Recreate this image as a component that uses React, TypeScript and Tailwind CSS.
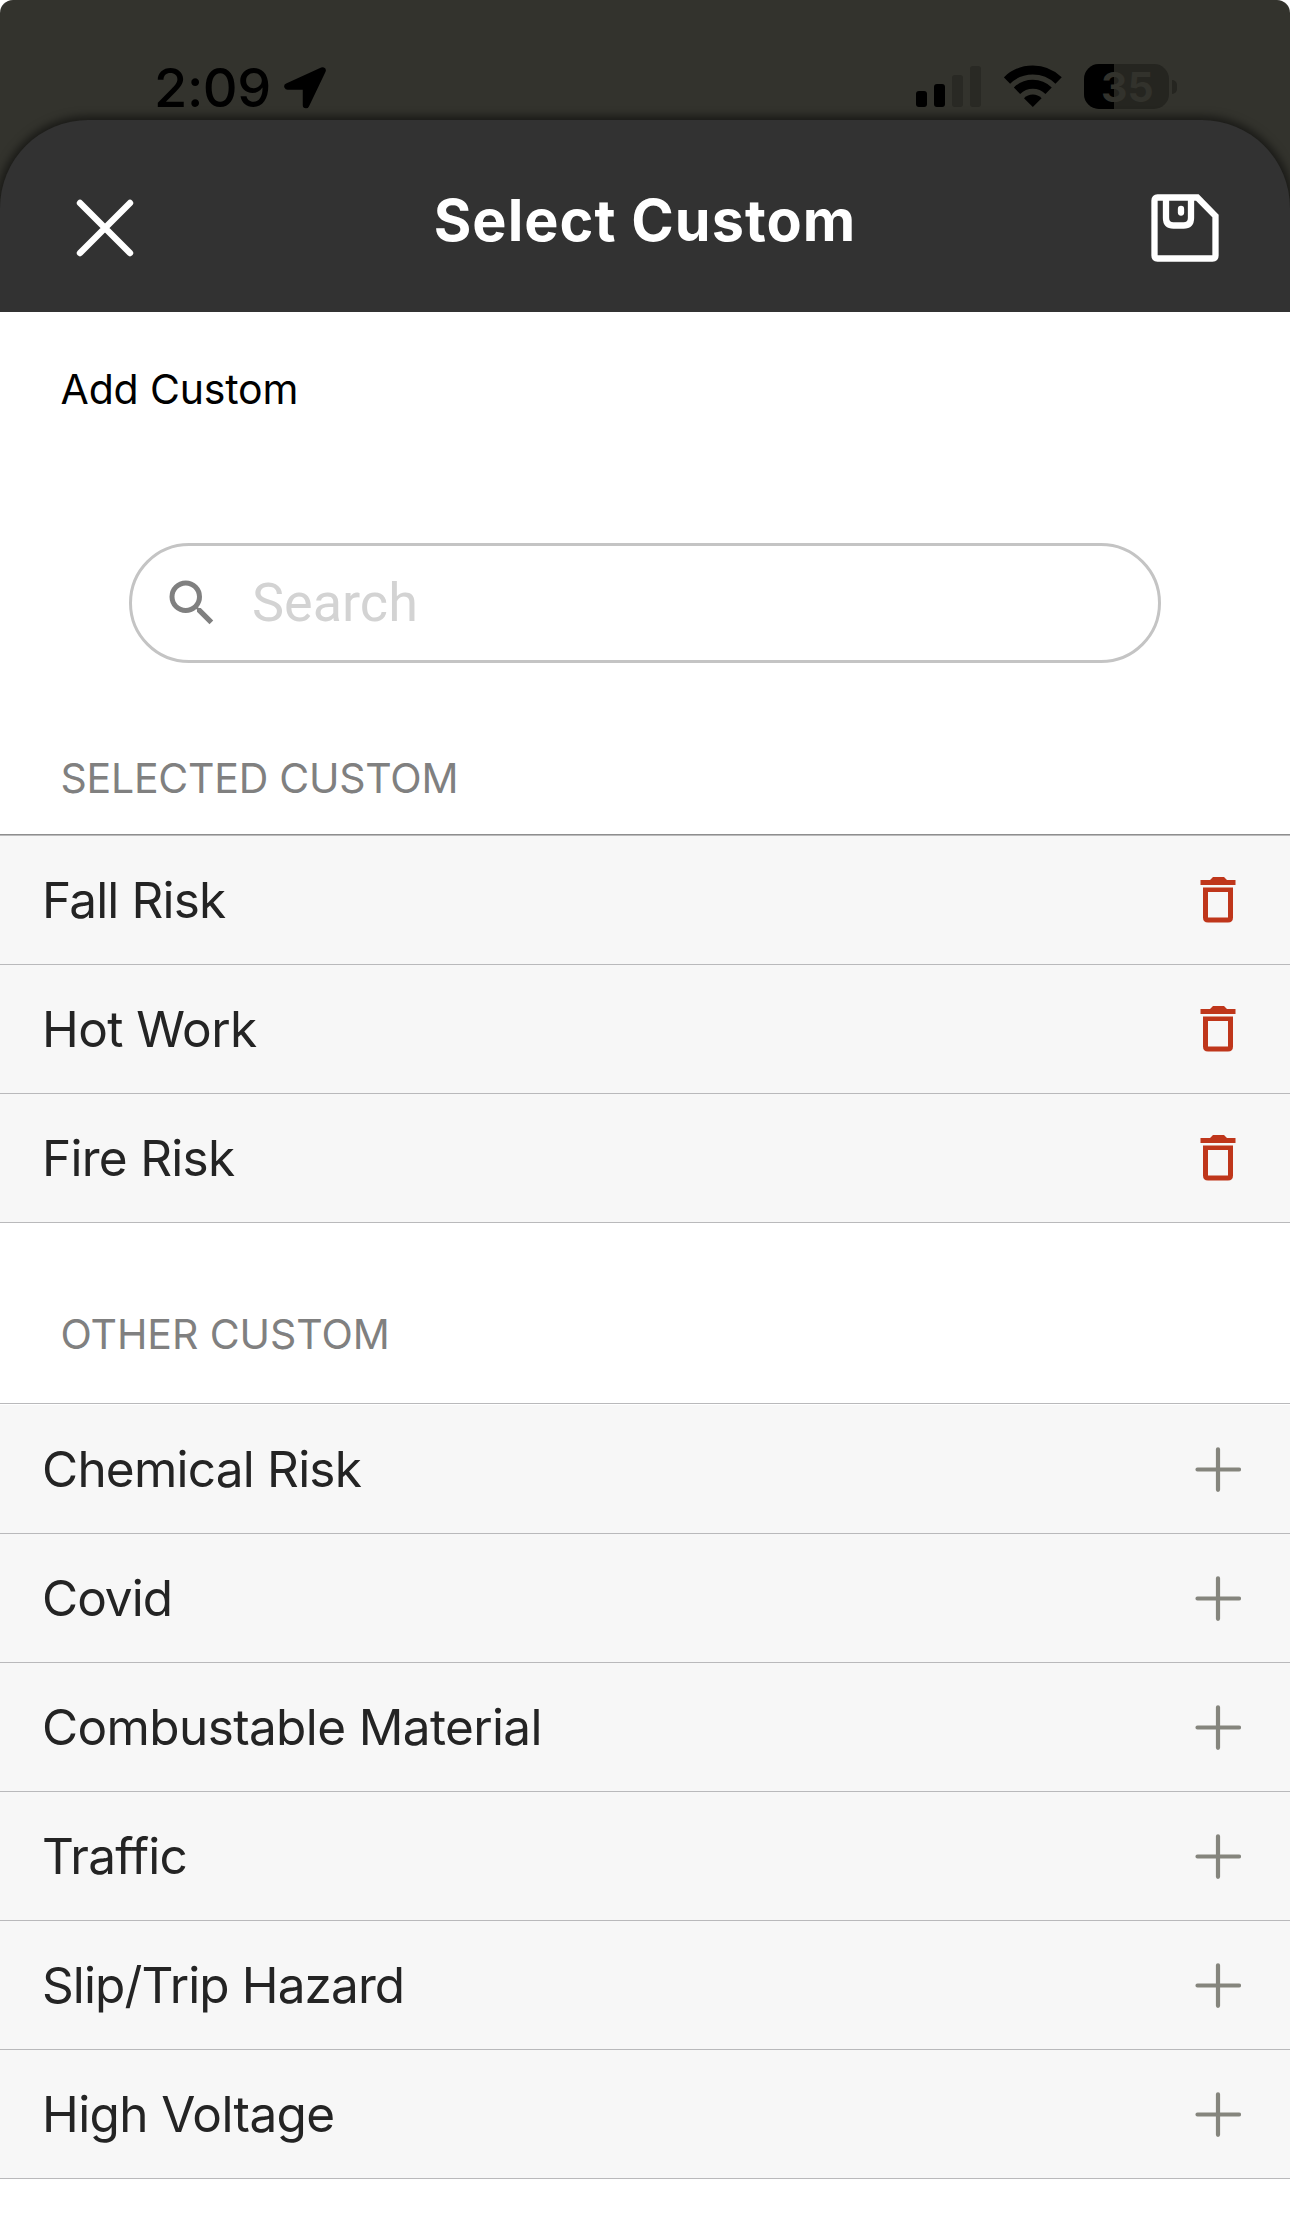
import React from 'react';
import { MdSearch } from 'react-icons/md';

type Item = { label: string; tracking: string };

const selected: Item[] = [
  { label: 'Fall Risk', tracking: 'tracking-[-0.83px]' },
  { label: 'Hot Work', tracking: 'tracking-[-0.56px]' },
  { label: 'Fire Risk', tracking: 'tracking-[-0.72px]' },
];

const others: Item[] = [
  { label: 'Chemical Risk', tracking: 'tracking-[-0.78px]' },
  { label: 'Covid', tracking: 'tracking-[-1px]' },
  { label: 'Combustable Material', tracking: 'tracking-[-0.63px]' },
  { label: 'Traffic', tracking: 'tracking-[-0.8px]' },
  { label: 'Slip/Trip Hazard', tracking: 'tracking-[-0.89px]' },
  { label: 'High Voltage', tracking: 'tracking-[-0.6px]' },
];

function LocationArrow() {
  return (
    <svg width="42" height="42" viewBox="0 0 42 42" className="ml-[13px] mt-[3px]">
      <path
        d="M38.5 3.5 3.5 19.5H22V38Z"
        fill="#000"
        stroke="#000"
        strokeWidth="6.5"
        strokeLinejoin="round"
      />
    </svg>
  );
}

function Signal() {
  return (
    <div className="flex h-[42px] items-end gap-[7px]">
      <div className="h-4 w-[11px] rounded-[3px] bg-black" />
      <div className="h-[23px] w-[11px] rounded-[3px] bg-black" />
      <div className="h-8 w-[11px] rounded-[3px] bg-[#292924]" />
      <div className="h-[41px] w-[11px] rounded-[3px] bg-[#292924]" />
    </div>
  );
}

function Wifi() {
  return (
    <svg width="58" height="42" viewBox="0 0 58 42" className="ml-[23px]">
      <g fill="none" stroke="#000" strokeWidth="9">
        <path d="M3 15.5A37 37 0 0 1 54.6 15.5" />
        <path d="M13 25.7A22.6 22.6 0 0 1 44.6 25.7" />
      </g>
      <path d="M20 33.2A12.5 12.5 0 0 1 37.6 33.2L28.8 42Z" fill="#000" />
    </svg>
  );
}

function Battery() {
  return (
    <div className="ml-[22px] flex items-center">
      <div className="relative flex h-[45px] w-[85px] rounded-[15px] bg-[#252520]">
        <div className="h-full w-[30px] rounded-l-[15px] bg-black" />
        <span className="absolute left-[17px] top-px text-[41px] font-bold leading-[45px] text-[#32322c]">
          35
        </span>
      </div>
      <div className="ml-[3px] h-[14px] w-[5px] rounded-r-full bg-[#252520]" />
    </div>
  );
}

function CloseIcon() {
  return (
    <svg width="60" height="60" viewBox="0 0 60 60">
      <path d="M5 5 55 55M55 5 5 55" stroke="#fff" strokeWidth="6.4" strokeLinecap="round" />
    </svg>
  );
}

function SaveIcon() {
  return (
    <svg width="68" height="68" viewBox="0 0 68 68" fill="none" stroke="#fff" strokeWidth="6.3">
      <path d="M46.3 3.5H6.5Q3.5 3.5 3.5 6.5V61.5Q3.5 64.5 6.5 64.5H61.5Q64.5 64.5 64.5 61.5V22Z" />
      <path d="M15 4V24Q15 31.500 22.500 31.500H32.500Q40 31.500 40 24V4" />
      <path d="M30 15V18.500" strokeLinecap="round" />
    </svg>
  );
}

function TrashIcon() {
  return (
    <svg width="36" height="46" viewBox="0 0 36 46">
      <path d="M10 3 13 0H24L27 3H35.500V8H.5V3Z" fill="#bf361b" />
      <path
        fillRule="evenodd"
        d="M3 10.500H33V40.500Q33 45.500 28 45.500H8Q3 45.500 3 40.500ZM8 15V40.500H28V15Z"
        fill="#bf361b"
      />
    </svg>
  );
}

function PlusIcon() {
  return (
    <svg width="46" height="46" viewBox="0 0 46 46">
      <path d="M23 3.300V43.800M2.500 23.500H44" stroke="#85857d" strokeWidth="4.2" strokeLinecap="round" />
    </svg>
  );
}

function Row({ item, icon }: { item: Item; icon: React.ReactNode }) {
  return (
    <li className="flex h-[129px] items-center justify-between border-b border-[#b9b9bb] bg-[#f7f7f7] pl-[42px] pr-[49px]">
      <span className={`text-[49.5px] leading-[64px] text-[#242424] ${item.tracking}`}>
        {item.label}
      </span>
      <button className="flex w-[46px] justify-center">{icon}</button>
    </li>
  );
}

export default function App() {
  return (
    <div className="h-[2235px] w-[1290px] overflow-hidden bg-white font-[Inter,sans-serif]">
      <div className="overflow-hidden rounded-t-[13px] bg-[#33332d]">
        <div className="flex h-[120px] justify-between pl-[154px] pr-[113px]">
          <div className="flex items-start pt-[64px]">
            <span className="text-[54px] font-medium leading-[48px] tracking-[-0.4px]">2:09</span>
            <LocationArrow />
          </div>
          <div className="flex items-start pt-[64px]">
            <div className="flex items-start pt-px">
              <Signal />
              <Wifi />
            </div>
            <Battery />
          </div>
        </div>
        <header className="relative flex h-[192px] items-start justify-between rounded-t-[88px] bg-[#323232] pl-[75px] pr-[71px] shadow-[0_0_9px_4px_rgba(0,0,0,0.5)]">
          <button className="mt-[78px]">
            <CloseIcon />
          </button>
          <h1 className="mt-[68px] pl-1 text-[57.5px] font-bold leading-[64px] tracking-[1.05px] text-white">
            Select Custom
          </h1>
          <button className="mt-[74px]">
            <SaveIcon />
          </button>
        </header>
      </div>

      <main>
        <p className="flex h-[154px] items-center pl-[60.500px] pt-0.5 text-[41px] tracking-[-0.16px] text-black">
          Add Custom
        </p>
        <div className="mx-[129px] mt-[77px] flex h-[120px] items-center rounded-full border-[3px] border-[#c4c4c4] pl-[30px]">
          <MdSearch size={60} color="#808080" />
          <span className="ml-[30px] font-[Roboto,sans-serif] text-[54px] leading-[64px] text-[#d3d3d3]">
            Search
          </span>
        </div>

        <h2 className="h-[171px] pl-[60.500px] pt-[90px] text-[41px] leading-[50px] tracking-[-0.24px] text-[#808080]">
          SELECTED CUSTOM
        </h2>
        <ul className="border-t border-[#8e8e8e]">
          <li className="h-px bg-[#bbbbbc]" />
          {selected.map((item) => (
            <Row key={item.label} item={item} icon={<TrashIcon />} />
          ))}
        </ul>

        <h2 className="h-[180px] pl-[60.500px] pt-[86px] text-[41px] leading-[50px] tracking-[-0.07px] text-[#808080]">
          OTHER CUSTOM
        </h2>
        <ul className="border-t border-[#b9b9bb] pt-px">
          {others.map((item) => (
            <Row key={item.label} item={item} icon={<PlusIcon />} />
          ))}
        </ul>
      </main>
    </div>
  );
}
